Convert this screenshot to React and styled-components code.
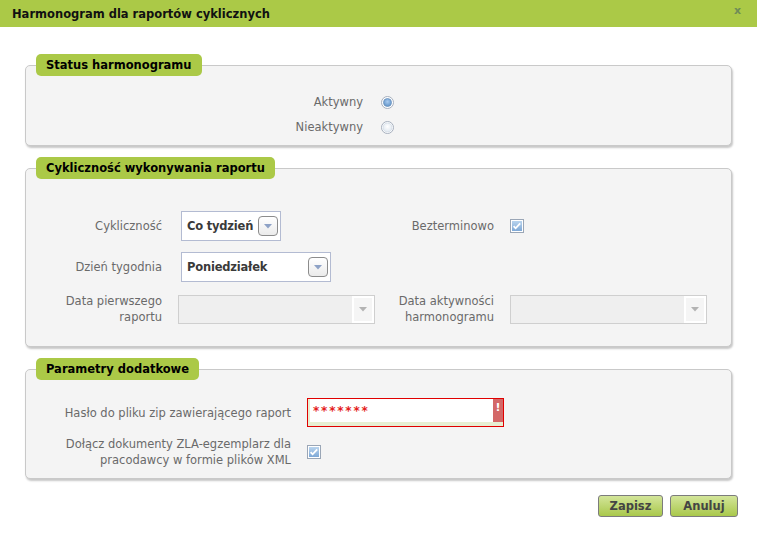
import React from "react"
import styled, { createGlobalStyle } from "styled-components"

const GlobalStyle = createGlobalStyle`
    body {
        margin: 0;
        background: #fff;
        font-family: "DejaVu Sans", Verdana, sans-serif;
    }
`

const Dialog = styled.div`
    width: 757px;
    height: 542px;
    display: flex;
    flex-direction: column;
    background: #fff;
`

const TitleBar = styled.div`
    height: 27px;
    background: #abc947;
    display: flex;
    align-items: center;
    justify-content: space-between;
    padding: 0 16px 0 12px;
`

const Title = styled.h1`
    margin: 0;
    font-size: 11.5px;
    font-weight: bold;
    color: #111;
`

const Close = styled.span`
    font-size: 11px;
    font-weight: bold;
    color: #6f8c57;
    margin-top: -6px;
`

const Body = styled.div`
    padding: 27px 25px 0;
    display: flex;
    flex-direction: column;
`

const Section = styled.section`
    display: flex;
    flex-direction: column;
    align-items: flex-start;
    margin-bottom: 11px;
`

const Legend = styled.div`
    position: relative;
    z-index: 1;
    margin-left: 11px;
    height: 22px;
    line-height: 22px;
    padding: 0 10px;
    background: #abc947;
    border-radius: 5px;
    font-size: 11.5px;
    font-weight: bold;
    color: #000;
`

const Panel = styled.div`
    align-self: stretch;
    margin-top: -11px;
    background: #f4f4f4;
    border: 1px solid #c9c9c9;
    border-radius: 5px;
    box-shadow: 1px 2px 2px rgba(0, 0, 0, 0.22);
    display: grid;
    grid-template-columns: ${p => p.$cols};
    column-gap: ${p => p.$gap || "16px"};
    row-gap: ${p => p.$rowGap || "0"};
    padding: ${p => p.$pad};
    align-items: center;
`

const Label = styled.label`
    font-size: 11.5px;
    line-height: 16px;
    color: #6a6a6a;
    text-align: right;
`

const Control = styled.div`
    display: flex;
    align-items: center;
    height: ${p => p.$h || "auto"};
`

const Select = styled.div`
    box-sizing: border-box;
    width: ${p => p.$w};
    height: 30px;
    margin-left: 3px;
    background: #fff;
    border: 1px solid #b3bbd2;
    display: flex;
    align-items: center;
    justify-content: space-between;
    padding: 0 2px 0 5px;
    font-size: 11.5px;
    font-weight: bold;
    color: #3a3a3a;
    white-space: nowrap;
    letter-spacing: -0.2px;
`

const DropButton = styled.span`
    box-sizing: border-box;
    flex: none;
    width: 20px;
    height: 20px;
    border: 1px solid #8c8c8c;
    border-radius: 4px;
    background: linear-gradient(#fff, #ebebeb);
    display: flex;
    align-items: center;
    justify-content: center;
`

const DisabledCombo = styled.div`
    box-sizing: border-box;
    width: 197px;
    height: 29px;
    background: #efefef;
    border: 1px solid #cfcfcf;
    display: flex;
    justify-content: flex-end;
`

const DisabledButton = styled.span`
    box-sizing: border-box;
    width: 22px;
    border: 2px solid #fff;
    background: #f5f5f5;
    display: flex;
    align-items: center;
    justify-content: center;
`

const PasswordBox = styled.div`
    box-sizing: border-box;
    width: 197px;
    height: 29px;
    border: 1px solid #e00000;
    background: #e7efd3;
    padding: 0 0 4px 2px;
    display: flex;
`

const PasswordField = styled.div`
    flex: 1;
    background: #fff;
    display: flex;
    align-items: center;
    padding-left: 3px;
    color: #e41c1c;
    font-size: 12px;
    font-weight: bold;
    letter-spacing: 1.8px;
`

const ErrorTab = styled.span`
    width: 10px;
    background: #d46868;
    color: #fff;
    font-size: 11px;
    font-weight: bold;
    text-align: center;
    line-height: 18px;
`

const Buttons = styled.div`
    display: flex;
    justify-content: flex-end;
    gap: 7px;
    padding-top: 5px;
    margin-right: -6px;
`

const Button = styled.button`
    box-sizing: border-box;
    width: ${p => p.$w};
    height: 22px;
    border: 1px solid #7c7c7c;
    border-radius: 3px;
    background: linear-gradient(#d3e59a, #a9c84b);
    font-family: "DejaVu Sans", Verdana, sans-serif;
    font-size: 11.5px;
    font-weight: bold;
    color: #444;
    padding: 0;
`

const Arrow = ({ color }) => (
    <svg width="8" height="5" viewBox="0 0 8 5">
        <path d="M0 0h8L4 4.5z" fill={color} />
    </svg>
)

const Radio = ({ checked }) => (
    <svg width="13" height="13" viewBox="0 0 13 13">
        <defs>
            <radialGradient id={checked ? "rOn" : "rOff"} cx="50%" cy="40%" r="60%">
                <stop offset="0" stopColor={checked ? "#a9cbef" : "#ffffff"} />
                <stop offset="1" stopColor={checked ? "#5e92c8" : "#dfe7ef"} />
            </radialGradient>
        </defs>
        <circle cx="6.5" cy="6.5" r="6" fill="#fff" stroke="#a6afbd" />
        <circle cx="6.5" cy="6.5" r={checked ? 4 : 4.5} fill={`url(#${checked ? "rOn" : "rOff"})`} stroke={checked ? "#6d93bd" : "#d2dbe4"} strokeWidth="0.8" />
    </svg>
)

const Checkbox = () => (
    <svg width="14" height="14" viewBox="0 0 14 14">
        <defs>
            <linearGradient id="cb" x1="0" y1="0" x2="0" y2="1">
                <stop offset="0" stopColor="#b9d4ee" />
                <stop offset="1" stopColor="#7ea8d6" />
            </linearGradient>
        </defs>
        <rect x="0.5" y="0.5" width="13" height="13" fill="#fff" stroke="#9aa6b6" />
        <rect x="2" y="2" width="10" height="10" fill="url(#cb)" />
        <path d="M3.6 7.2l2 2.1 4.6-5" fill="none" stroke="#fff" strokeWidth="1.8" />
    </svg>
)

const App = () => (
    <Dialog>
        <GlobalStyle />
        <TitleBar>
            <Title>Harmonogram dla raportów cyklicznych</Title>
            <Close>x</Close>
        </TitleBar>
        <Body>
            <Section>
                <Legend>Status harmonogramu</Legend>
                <Panel $cols="337px 13px" $gap="18px" $rowGap="5px" $pad="26px 0 8px">
                    <Label>Aktywny</Label>
                    <Control $h="20px"><Radio checked /></Control>
                    <Label>Nieaktywny</Label>
                    <Control $h="20px"><Radio /></Control>
                </Panel>
            </Section>

            <Section>
                <Legend>Cykliczność wykonywania raportu</Legend>
                <Panel $cols="136px 197px 103px 197px" $rowGap="11px" $pad="42px 0 21px">
                    <Label>Cykliczność</Label>
                    <Control>
                        <Select $w="100px">Co tydzień<DropButton><Arrow color="#8ea2c6" /></DropButton></Select>
                    </Control>
                    <Label>Bezterminowo</Label>
                    <Control><Checkbox /></Control>

                    <Label>Dzień tygodnia</Label>
                    <Control>
                        <Select $w="150px">Poniedziałek<DropButton><Arrow color="#8ea2c6" /></DropButton></Select>
                    </Control>
                    <span />
                    <span />

                    <Label>Data pierwszego<br />raportu</Label>
                    <Control>
                        <DisabledCombo><DisabledButton><Arrow color="#b3b3b3" /></DisabledButton></DisabledCombo>
                    </Control>
                    <Label>Data aktywności<br />harmonogramu</Label>
                    <Control>
                        <DisabledCombo><DisabledButton><Arrow color="#b3b3b3" /></DisabledButton></DisabledCombo>
                    </Control>
                </Panel>
            </Section>

            <Section>
                <Legend>Parametry dodatkowe</Legend>
                <Panel $cols="265px 197px" $rowGap="9px" $pad="28px 0 10px">
                    <Label>Hasło do pliku zip zawierającego raport</Label>
                    <Control>
                        <PasswordBox>
                            <PasswordField>*******</PasswordField>
                            <ErrorTab>!</ErrorTab>
                        </PasswordBox>
                    </Control>
                    <Label>Dołącz dokumenty ZLA-egzemplarz dla<br />pracodawcy w formie plików XML</Label>
                    <Control><Checkbox /></Control>
                </Panel>
            </Section>

            <Buttons>
                <Button $w="65px">Zapisz</Button>
                <Button $w="68px">Anuluj</Button>
            </Buttons>
        </Body>
    </Dialog>
)

export default App
